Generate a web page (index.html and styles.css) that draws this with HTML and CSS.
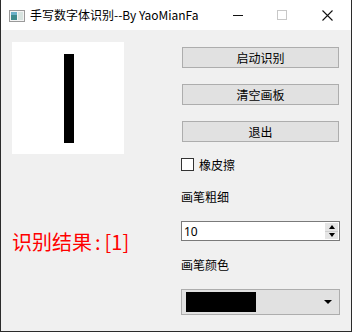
FILE: index.html
```html
<!DOCTYPE html>
<html lang="zh">
<head>
  <meta charset="UTF-8">
  <title>手写数字体识别--By YaoMianFa</title>
  <link rel="stylesheet" href="styles.css">
</head>
<body>

<div class="window">
  <div class="titlebar">
    <svg class="app-icon" width="16" height="12" viewBox="0 0 16 12">
      <rect x="0.5" y="0.5" width="15" height="11" fill="#f4f4f4" stroke="#9a9a9a"/>
      <rect x="2" y="2" width="6" height="8" fill="#3d8a8c"/>
      <rect x="2" y="2" width="6" height="3" fill="#6ab0c8"/>
      <rect x="9" y="2" width="5" height="8" fill="#d8e4e0"/>
    </svg>
    <span class="title">手写数字体识别--By YaoMianFa</span>
    <div class="controls">
      <span class="ctl min"></span>
      <span class="ctl max"></span>
      <svg class="ctl close" width="11" height="11" viewBox="0 0 11 11">
        <path d="M0.5 0.5 L10.5 10.5 M10.5 0.5 L0.5 10.5" stroke="#111" stroke-width="1.1"/>
      </svg>
    </div>
  </div>

  <div class="content">
    <div class="left">
      <div class="board">
        <div class="stroke"></div>
      </div>
      <div class="result">识别结果<span class="colon">:</span>[1]</div>
    </div>

    <div class="right">
      <button class="btn">启动识别</button>
      <button class="btn">清空画板</button>
      <button class="btn">退出</button>
      <label class="check"><span class="box"></span>橡皮擦</label>
      <div class="label first">画笔粗细</div>
      <div class="spin">
        <span class="value">10</span>
        <span class="arrows">
          <span class="up"></span>
          <span class="down"></span>
        </span>
      </div>
      <div class="label">画笔颜色</div>
      <div class="combo">
        <span class="swatch"></span>
        <span class="drop"></span>
      </div>
    </div>
  </div>
</div>

</body>
</html>
```

FILE: styles.css
```css
body {
  margin: 0;
  font-family: "Noto Sans", "Noto Sans CJK SC", sans-serif;
  font-size: 12px;
  color: #000;
  background: #fff;
}

.window {
  width: 352px;
  height: 332px;
  box-sizing: border-box;
  border: 1px solid #2b2b2b;
  border-top: none;
  background: #f0f0f0;
  display: flex;
  flex-direction: column;
}

.titlebar {
  height: 30px;
  background: #fff;
  display: flex;
  align-items: center;
  padding-left: 8px;
}

.app-icon {
  margin-top: 1px;
}

.title {
  margin-left: 5px;
  font-family: "Noto Sans CJK SC", sans-serif;
  font-size: 12px;
  line-height: 16px;
}

.controls {
  margin-left: auto;
  display: flex;
  align-items: center;
}

.ctl {
  display: block;
}

.min {
  width: 10px;
  height: 1px;
  background: #111;
  margin-right: 34px;
}

.max {
  width: 8px;
  height: 8px;
  border: 1px solid #c8c8c8;
  margin-right: 35px;
}

.close {
  margin-right: 18px;
}

.content {
  flex: 1;
  display: flex;
  padding: 12px 10px 0 11px;
}

.left {
  width: 112px;
}

.board {
  width: 112px;
  height: 112px;
  background: #fff;
  display: flex;
  justify-content: center;
}

.stroke {
  width: 10px;
  height: 89px;
  margin-top: 12px;
  margin-left: 2px;
  background: #000;
}

.result {
  margin-top: 76px;
  color: #ff0000;
  font-size: 20px;
  line-height: 24px;
  white-space: nowrap;
  font-family: "Noto Sans CJK SC", sans-serif;
}

.colon {
  padding: 0 4px 0 3px;
}

.right {
  margin-left: 57px;
  width: 159px;
  padding-top: 5px;
  display: flex;
  flex-direction: column;
}

.btn {
  height: 21px;
  margin: 0 1px 16px;
  padding: 0;
  font-family: inherit;
  font-size: 12px;
  background: #e1e1e1;
  border: 1px solid #adadad;
  color: #000;
}

.check {
  height: 13px;
  display: flex;
  align-items: center;
  font-size: 12px;
}

.box {
  width: 11px;
  height: 11px;
  border: 1px solid #333;
  background: #fff;
  margin-right: 5px;
}

.label {
  margin-top: 17px;
  line-height: 16px;
}

.label.first {
  margin-top: 19px;
}

.spin {
  margin-top: 15px;
  height: 20px;
  box-sizing: border-box;
  border: 1px solid #7a7a7a;
  background: #fff;
  display: flex;
  align-items: center;
}

.value {
  padding-left: 2px;
}

.arrows {
  margin-left: auto;
  margin-right: 1px;
  width: 13px;
  height: 16px;
  display: flex;
  flex-direction: column;
  background: #e5e5e5;
}

.up, .down {
  flex: 1;
  display: flex;
  align-items: center;
  justify-content: center;
}

.up::after {
  content: "";
  border-left: 3px solid transparent;
  border-right: 3px solid transparent;
  border-bottom: 4px solid #000;
}

.down::after {
  content: "";
  border-left: 3px solid transparent;
  border-right: 3px solid transparent;
  border-top: 4px solid #000;
}

.down {
  border-top: 1px solid #cfcfcf;
}

.combo {
  margin-top: 15px;
  height: 26px;
  box-sizing: border-box;
  border: 1px solid #adadad;
  background: #e1e1e1;
  display: flex;
  align-items: center;
  padding-left: 4px;
}

.swatch {
  width: 70px;
  height: 20px;
  background: #000;
}

.drop {
  margin-left: auto;
  margin-right: 7px;
  border-left: 4px solid transparent;
  border-right: 4px solid transparent;
  border-top: 4px solid #000;
}
```
